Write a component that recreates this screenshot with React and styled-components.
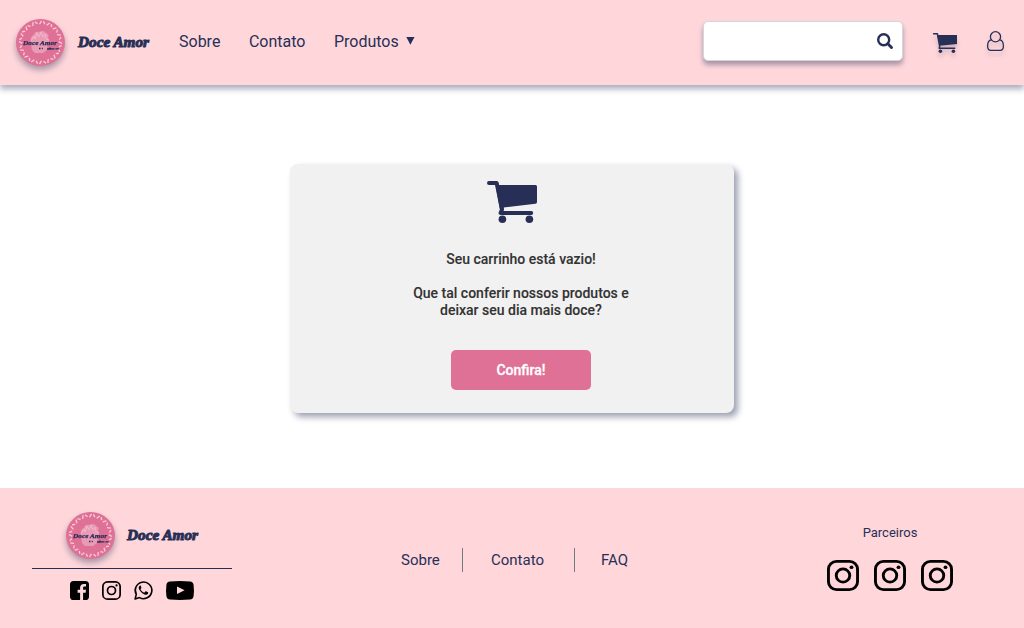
import React from "react";
import styled, { createGlobalStyle } from "styled-components";

const navy = "#272f56";
const pink = "#ffd7db";
const rose = "#df7196";

const GlobalStyle = createGlobalStyle`
  * { box-sizing: border-box; }
  body { margin: 0; background: #fff; font-family: Roboto, "Liberation Sans", sans-serif; overflow: hidden; }
`;

const Page = styled.div`
  height: 628px;
  display: flex;
  flex-direction: column;
`;

const Header = styled.header`
  height: 85px;
  flex: none;
  display: flex;
  align-items: flex-start;
  padding: 0 20px 0 16px;
  background: ${pink};
  box-shadow: 0 4px 6px rgba(39, 47, 86, 0.4);
`;

const Brand = styled.a`
  display: flex;
  align-items: flex-start;
  height: 48px;
  margin: ${(p) => p.$margin};
  color: ${navy};
`;

const Badge = styled.svg`
  display: block;
  width: 49px;
  height: 47px;
  overflow: visible;
  filter: drop-shadow(0 4px 3px rgba(39, 47, 86, 0.4));
`;

const Wordmark = styled.svg`
  display: block;
  width: 74px;
  height: 22px;
  margin: 13px 0 0 ${(p) => p.$gap}px;
  overflow: visible;
`;

const Nav = styled.nav`
  display: flex;
  gap: 28.5px;
  margin: 32px 0 0 28px;
`;

const NavLink = styled.a`
  display: flex;
  color: ${navy};
  font-size: 16px;
  line-height: 19px;
`;

const Caret = styled.svg`
  width: 9px;
  height: 9px;
  margin: 4px 0 0 7px;
`;

const SearchBox = styled.div`
  width: 200px;
  height: 40px;
  display: flex;
  justify-content: flex-end;
  align-items: center;
  margin: 21px 0 0 auto;
  padding-right: 9px;
  background: #fff;
  border: 1px solid #d5d5dc;
  border-radius: 5px;
  box-shadow: 0 4px 5px rgba(39, 47, 86, 0.4);
`;

const Icon = styled.svg`
  display: block;
  flex: none;
  width: ${(p) => p.$w}px;
  height: ${(p) => p.$h}px;
  margin: ${(p) => p.$margin || 0};
  overflow: visible;
  color: ${(p) => p.$color || navy};
  filter: ${(p) => (p.$shadow ? "drop-shadow(0 4px 2px rgba(39, 47, 86, 0.22))" : "none")};
`;

const Main = styled.main`
  flex: 1;
  display: flex;
  justify-content: center;
  align-items: flex-start;
  padding-top: 79px;
`;

const Card = styled.section`
  width: 444px;
  height: 249px;
  display: flex;
  flex-direction: column;
  align-items: center;
  padding-top: 17px;
  background: #f1f1f1;
  border-radius: 8px;
  box-shadow: 4px 4px 6px rgba(39, 47, 86, 0.45);
`;

const Message = styled.div`
  width: 240px;
  margin: 28px 0 0 18px;
  color: #333;
  font-size: 14px;
  font-weight: 500;
  line-height: 17px;
  text-align: center;
  -webkit-text-stroke: 0.1px #333;
`;

const Line = styled.p`
  margin: 0 0 17px;
`;

const Action = styled.button`
  width: 140px;
  height: 40px;
  margin: 14px 0 0 18px;
  padding: 0;
  border: 0;
  border-radius: 5px;
  background: ${rose};
  color: #fff;
  font: 500 14px Roboto, sans-serif;
  -webkit-text-stroke: 0.3px #fff;
`;

const Footer = styled.footer`
  height: 140px;
  flex: none;
  display: flex;
  align-items: flex-start;
  background: ${pink};
`;

const Social = styled.div`
  width: 200px;
  margin: 24px 0 0 32px;
`;

const SocialRow = styled.div`
  display: flex;
  padding: 12px 0 0 38px;
  border-top: 1px solid ${navy};
`;

const FooterNav = styled.nav`
  display: flex;
  align-items: center;
  height: 24px;
  margin: 60px 0 0 169px;
`;

const FooterLink = styled.a`
  width: ${(p) => p.$w}px;
  color: ${navy};
  font-size: 15px;
  line-height: 24px;
  height: 24px;
  padding-left: ${(p) => p.$pad || 0}px;
  border-left: ${(p) => (p.$pad ? "1px solid #747b78" : "0")};
`;

const Partners = styled.div`
  width: 126px;
  margin: 36px 71px 0 auto;
  display: flex;
  flex-direction: column;
  align-items: center;
`;

const PartnerTitle = styled.span`
  color: ${navy};
  font-size: 13px;
  line-height: 17px;
`;

const PartnerRow = styled.div`
  display: flex;
  gap: 15px;
  margin-top: 19px;
`;

const script = { fontFamily: "'Liberation Serif', serif", fontStyle: "italic", fontWeight: 700 };

const ticks = Array.from({ length: 32 }, (_, i) => i * 11.25);

function Logo({ margin, gap }) {
  return (
    <Brand $margin={margin}>
      <Badge viewBox="0 0 49 47" preserveAspectRatio="none">
        <ellipse cx="24.5" cy="23.5" rx="24.5" ry="23.5" fill={rose} />
        {ticks.map((a, i) => (
          <path
            key={a}
            d={i % 2 ? "M23.2 2.2l2 2.4" : "M25.5 1.9l-1.9 3.4"}
            stroke="#fbcbd8"
            strokeWidth="1.3"
            transform={`rotate(${a} 24.5 23.5)`}
          />
        ))}
        <path
          d="M15 23c-1-4 1-7 3-7 0-3 3-4 5-3 3-2 6-1 7 1 3 1 3 3 2 5 2 2 1 4 0 5l-1 7-4 3h-8l-3-3z"
          fill="#e99ab5"
        />
        <path
          d="M15 22l3-5 1 3 2-6 2 4 2-5 2 5 2-3 1 5 3 1"
          fill="none"
          stroke="#f3b4c8"
          strokeWidth="1"
        />
        <text x="7" y="25.6" fontSize="6.6" textLength="34" lengthAdjust="spacingAndGlyphs" fill={navy} stroke={navy} strokeWidth=".25" {...script}>
          Doce Amor
        </text>
        <path d="M23 29.5h1.5M25.8 29.5h1M31 30h3v-1.5M34.5 29.8h4M39.5 29.8h3.5" stroke={navy} strokeWidth="1.3" fill="none" />
      </Badge>
      <Wordmark $gap={gap}>
        <text x="1" y="14.8" fontSize="14.5" textLength="71" lengthAdjust="spacingAndGlyphs" fill={navy} stroke={navy} strokeWidth="1" strokeLinejoin="round" {...script}>
          Doce Amor
        </text>
      </Wordmark>
    </Brand>
  );
}

function Instagram({ w, h, margin }) {
  return (
    <Icon viewBox="0 0 32 32" preserveAspectRatio="none" $w={w} $h={h} $margin={margin} $color="#000">
      <rect x="1.45" y="1.45" width="29.1" height="29.1" rx="8" fill="none" stroke="currentColor" strokeWidth="2.9" />
      <circle cx="16" cy="16" r="6.75" fill="none" stroke="currentColor" strokeWidth="2.9" />
      <circle cx="24.5" cy="7.5" r="1.9" fill="currentColor" />
    </Icon>
  );
}

export default function App() {
  return (
    <>
      <GlobalStyle />
      <Page>
        <Header>
          <Logo margin="19px 0 0" gap={12} />
          <Nav>
            <NavLink>Sobre</NavLink>
            <NavLink>Contato</NavLink>
            <NavLink>
              Produtos
              <Caret viewBox="0 0 9 9"><path d="M.3 1h8.2L4.4 8.8z" fill={navy} /></Caret>
            </NavLink>
          </Nav>
          <SearchBox>
            <Icon viewBox="0 0 16 16" $w={16} $h={16}>
              <circle cx="6.7" cy="6.7" r="5.5" fill="none" stroke="currentColor" strokeWidth="2.4" />
              <path d="M10.8 10.8l3.7 3.7" stroke="currentColor" strokeWidth="2.9" strokeLinecap="round" />
            </Icon>
          </SearchBox>
          <Icon viewBox="0 0 24 20" $w={24} $h={20} $margin="33px 0 0 30px" $shadow>
            <path d="M4.2 2H24v8.9L6.6 12.8z" fill="currentColor" />
            <path d="M.6.8h3.8l2.3 12.5-.5 1.9h15.5" fill="none" stroke="currentColor" strokeWidth="1.5" strokeLinecap="round" strokeLinejoin="round" />
            <circle cx="7.4" cy="18.3" r="1.8" fill="currentColor" />
            <circle cx="20.4" cy="18.3" r="1.8" fill="currentColor" />
          </Icon>
          <Icon viewBox="0 0 17 20" $w={17} $h={20} $margin="31px 0 0 30px" $shadow>
            <circle cx="8.5" cy="5.8" r="5.1" fill="none" stroke="currentColor" strokeWidth="1.3" />
            <path d="M4.3 8.9C1.9 9.2.6 11.7.6 15c0 2.7 1.3 4.4 3.3 4.4h9.2c2 0 3.3-1.7 3.3-4.4 0-3.3-1.3-5.8-3.7-6.1" fill="none" stroke="currentColor" strokeWidth="1.3" />
          </Icon>
        </Header>
        <Main>
          <Card>
            <Icon viewBox="0 0 50 42" $w={50} $h={42}>
              <path d="M8.5 4H48.5q1.5 0 1.5 1.5V21q0 1.6-1.5 1.8L16.5 26.4l.2 2H13z" fill="currentColor" />
              <path d="M2 2H9.7L15 28.5l-1.4 3.5H44.2" fill="none" stroke="currentColor" strokeWidth="4" strokeLinecap="round" strokeLinejoin="round" />
              <circle cx="15.4" cy="38.2" r="3.8" fill="currentColor" />
              <circle cx="42.4" cy="38.2" r="3.8" fill="currentColor" />
            </Icon>
            <Message>
              <Line>Seu carrinho está vazio!</Line>
              <Line>Que tal conferir nossos produtos e deixar seu dia mais doce?</Line>
            </Message>
            <Action>Confira!</Action>
          </Card>
        </Main>
        <Footer>
          <Social>
            <Logo margin="0 0 8px 34px" gap={11} />
            <SocialRow>
              <Icon viewBox="0 0 19 19" $w={19} $h={19} $color="#000">
                <path
                  d="M3.6 0h11.8Q19 0 19 3.6v11.8q0 3.6-3.6 3.6h-2.3v-7.3h2.5l.4-2.9h-2.9V7c0-.9.3-1.4 1.4-1.4H16V3c-.3 0-1.2-.1-2.2-.1-2.2 0-3.7 1.3-3.7 3.8v2.1H7.6v2.9h2.5V19H3.6Q0 19 0 15.4V3.6Q0 0 3.6 0z"
                  fill="currentColor"
                />
              </Icon>
              <Instagram w={19} h={19} margin="0 0 0 13px" />
              <Icon viewBox="0 0 19 19" $w={19} $h={19} $margin="0 0 0 13px" $color="#000">
                <path d="M1.1 17.9l1.2-4.5a8.3 8.3 0 1 1 3.2 3.2z" fill="none" stroke="currentColor" strokeWidth="1.6" strokeLinejoin="round" />
                <path
                  d="M6.8 4.9c-.3-.5-.9-.4-1.3 0-1.2 1.2-1 2.8.3 4.6 1.6 2.3 3.3 3.6 5.3 4.2 1.4.4 3-.5 3.1-1.8 0-.5-.1-.6-.5-.8l-1.7-.8c-.3-.1-.5 0-.7.2l-.7.9c-.2.2-.4.3-.7.1-1.5-.6-2.5-1.6-3.3-2.9-.1-.3 0-.5.1-.6.6-.7.8-.9.6-1.4z"
                  fill="currentColor"
                />
              </Icon>
              <Icon viewBox="0 0 28 19" $w={28} $h={19} $margin="0 0 0 13px" $color="#000">
                <path
                  d="M4 .5Q14-.4 24 .5 27.2.8 27.6 4q.7 5.5 0 11-.4 3.2-3.6 3.5-10 .9-20 0Q.8 18.2.4 15q-.7-5.5 0-11Q.8.8 4 .5zM11 5.5v7.6l7.6-3.8z"
                  fill="currentColor"
                  fillRule="evenodd"
                />
              </Icon>
            </SocialRow>
          </Social>
          <FooterNav>
            <FooterLink $w={61}>Sobre</FooterLink>
            <FooterLink $w={112} $pad={28}>Contato</FooterLink>
            <FooterLink $w={60} $pad={26}>FAQ</FooterLink>
          </FooterNav>
          <Partners>
            <PartnerTitle>Parceiros</PartnerTitle>
            <PartnerRow>
              <Instagram w={32} h={31} />
              <Instagram w={32} h={31} />
              <Instagram w={32} h={31} />
            </PartnerRow>
          </Partners>
        </Footer>
      </Page>
    </>
  );
}
